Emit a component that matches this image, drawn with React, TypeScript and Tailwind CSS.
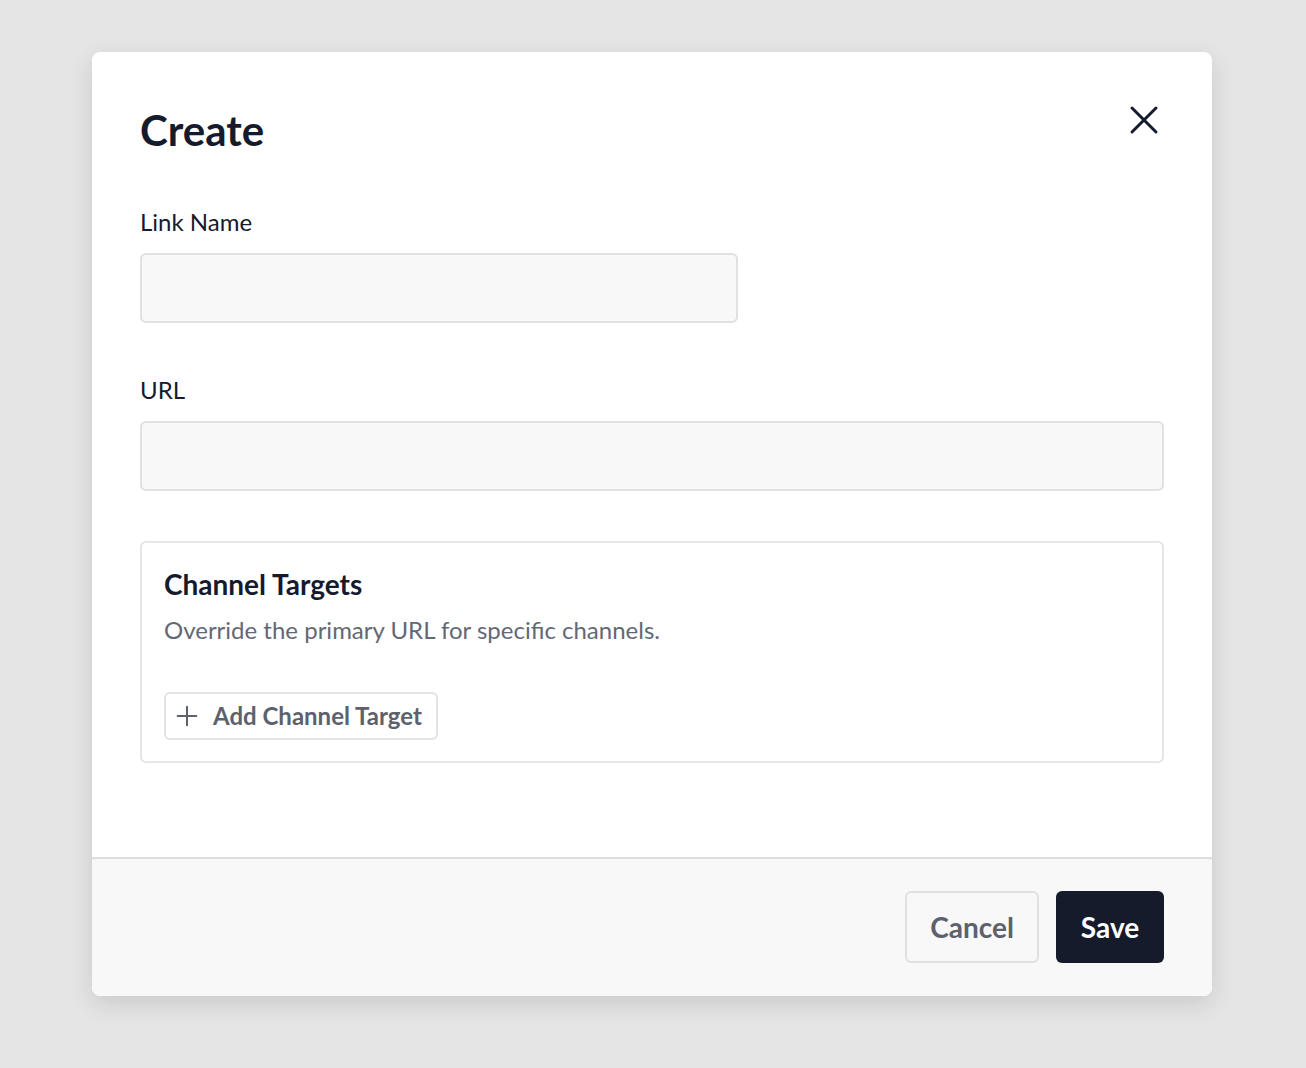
import { X, Plus } from "lucide-react";

export default function App() {
  return (
    <div
      className="min-h-[1068px] w-full bg-[#e5e5e5] pt-[52px] text-[#151a2d]"
      style={{ fontFamily: "Lato, 'Noto Sans', sans-serif" }}
    >
      <div className="ml-[92px] w-[1120px] rounded-lg bg-white shadow-[0_8px_24px_rgba(0,0,0,0.12)] overflow-hidden">
        {/* body */}
        <div className="px-12 pt-[53px] pb-[94px]">
          <div className="flex items-center justify-between h-[50px]">
            <h1 className="text-[42px] font-bold leading-[50px]">Create</h1>
            <button className="mr-[-4px] mt-[-20px] text-[#151a2d]">
              <X className="w-[48px] h-[48px]" strokeWidth={1.5} />
            </button>
          </div>

          <label className="mt-[52px] block text-[24px] leading-[30px]">Link Name</label>
          <input className="mt-[16px] block h-[70px] w-[598px] rounded-md border-2 border-[#e1e1e3] bg-[#f8f8f8] outline-none" />

          <label className="mt-[52px] block text-[24px] leading-[30px]">URL</label>
          <input className="mt-[16px] block h-[70px] w-full rounded-md border-2 border-[#e1e1e3] bg-[#f8f8f8] outline-none" />

          <div className="mt-[50px] rounded-md border-2 border-[#e6e6e8] px-[22px] pt-[24px] pb-[21px]">
            <h2 className="text-[28px] font-bold leading-[34px]">Channel Targets</h2>
            <p className="mt-[14px] text-[24px] leading-[30px] text-[#646875]">
              Override the primary URL for specific channels.
            </p>
            <button className="mt-[47px] flex h-[48px] items-center gap-[10px] rounded-md border-2 border-[#e3e3e6] bg-white pl-[5px] pr-[14px] text-[24px] font-bold text-[#5d616d]">
              <Plus className="w-[32px] h-[32px]" strokeWidth={1.5} />
              Add Channel Target
            </button>
          </div>
        </div>

        {/* footer */}
        <div className="flex justify-end gap-[17px] border-t-2 border-[#dededf] bg-[#f8f8f8] px-12 pt-[32px] pb-[33px]">
          <button className="h-[72px] w-[134px] rounded-md border-2 border-[#e1e1e3] bg-[#f8f8f8] text-[28px] font-bold text-[#5d616d]">
            Cancel
          </button>
          <button className="h-[72px] w-[108px] rounded-md bg-[#161b2c] text-[28px] font-bold text-white">
            Save
          </button>
        </div>
      </div>
    </div>
  );
}
